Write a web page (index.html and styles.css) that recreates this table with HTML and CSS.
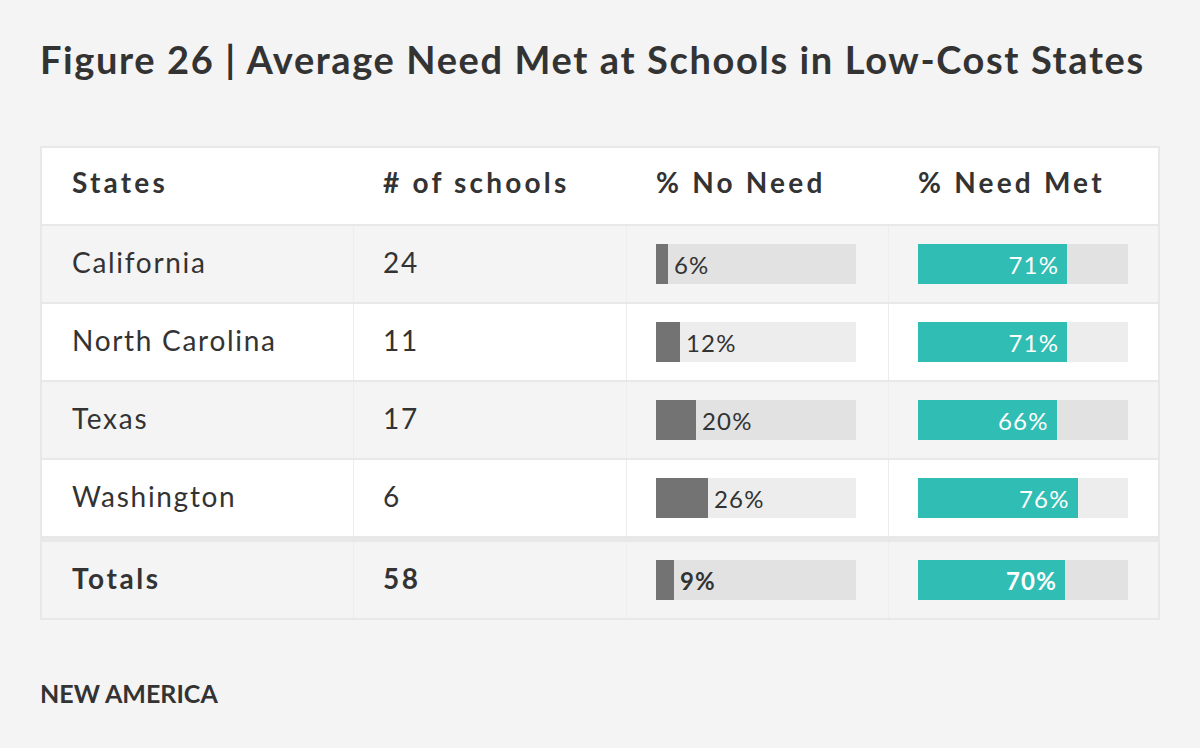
FILE: index.html
```html
<!DOCTYPE html>
<html lang="en">
<head>
<meta charset="utf-8">
<title>Figure 26</title>
<link rel="stylesheet" href="styles.css">
</head>
<body>
<main class="page">
  <h1 class="title">Figure 26 | Average Need Met at Schools in Low-Cost States</h1>
  <div class="table">
    <div class="row head">
      <div class="cell">States</div>
      <div class="cell"># of schools</div>
      <div class="cell">% No Need</div>
      <div class="cell">% Need Met</div>
    </div>
    <div class="row odd">
      <div class="cell">California</div>
      <div class="cell">24</div>
      <div class="cell"><div class="track short"><div class="fill dark" style="width:6%"></div><span class="lbl">6%</span></div></div>
      <div class="cell"><div class="track long"><div class="fill teal" style="width:71%"><span class="lbl in">71%</span></div></div></div>
    </div>
    <div class="row even">
      <div class="cell">North Carolina</div>
      <div class="cell">11</div>
      <div class="cell"><div class="track short"><div class="fill dark" style="width:12%"></div><span class="lbl">12%</span></div></div>
      <div class="cell"><div class="track long"><div class="fill teal" style="width:71%"><span class="lbl in">71%</span></div></div></div>
    </div>
    <div class="row odd">
      <div class="cell">Texas</div>
      <div class="cell">17</div>
      <div class="cell"><div class="track short"><div class="fill dark" style="width:20%"></div><span class="lbl">20%</span></div></div>
      <div class="cell"><div class="track long"><div class="fill teal" style="width:66%"><span class="lbl in">66%</span></div></div></div>
    </div>
    <div class="row even last">
      <div class="cell">Washington</div>
      <div class="cell">6</div>
      <div class="cell"><div class="track short"><div class="fill dark" style="width:26%"></div><span class="lbl">26%</span></div></div>
      <div class="cell"><div class="track long"><div class="fill teal" style="width:76%"><span class="lbl in">76%</span></div></div></div>
    </div>
    <div class="row odd total">
      <div class="cell">Totals</div>
      <div class="cell">58</div>
      <div class="cell"><div class="track short"><div class="fill dark" style="width:9%"></div><span class="lbl">9%</span></div></div>
      <div class="cell"><div class="track long"><div class="fill teal" style="width:70%"><span class="lbl in">70%</span></div></div></div>
    </div>
  </div>
  <div class="brand">NEW AMERICA</div>
</main>
</body>
</html>
```

FILE: styles.css
```css
* { box-sizing: border-box; }
html, body {
  margin: 0;
  padding: 0;
  background: #f4f4f4;
}
body {
  font-family: "Lato", "Liberation Sans", sans-serif;
  color: #333333;
}
.page {
  padding: 34px 40px 0 40px;
}
.title {
  margin: 0;
  font-size: 38px;
  line-height: 50px;
  font-weight: 700;
  letter-spacing: 1.62px;
  color: #333333;
}
.table {
  margin-top: 62px;
  border: 2px solid #e8e8e8;
  width: 1120px;
}
.row {
  display: grid;
  grid-template-columns: 311px 273px 262px 1fr;
  height: 78px;
  border-bottom: 2px solid #e8e8e8;
  font-size: 28px;
  letter-spacing: 1.7px;
}
.row.head {
  background: #ffffff;
  font-weight: 700;
  letter-spacing: 3.2px;
}
.row.head .cell { padding-bottom: 8px; }
.row.odd { background: #f4f4f4; }
.row.even { background: #ffffff; }
.row.last { height: 82px; border-bottom-width: 6px; }
.row.total {
  border-bottom: 0;
  height: 76px;
  font-weight: 700;
  letter-spacing: 2.6px;
}
.cell {
  display: flex;
  align-items: center;
  padding-left: 30px;
  padding-bottom: 4px;
}
.row:not(.head) .cell + .cell {
  border-left: 1px solid #ededed;
  padding-left: 29px;
}
.track {
  position: relative;
  display: flex;
  align-items: center;
  height: 40px;
  margin-top: 4px;
  background: rgba(0, 0, 0, 0.07);
}
.track.short { width: 200px; }
.track.long { width: 210px; }
.fill {
  height: 40px;
  display: flex;
  align-items: center;
  justify-content: flex-end;
}
.fill.dark { background: #737373; }
.fill.teal { background: #30bdb3; }
.lbl {
  font-size: 24px;
  letter-spacing: 1.2px;
  padding-left: 6px;
  color: #333333;
}
.lbl.in {
  color: #ffffff;
  padding-left: 0;
  padding-right: 8px;
}
.brand {
  margin-top: 58px;
  font-size: 25px;
  font-weight: 700;
  letter-spacing: 0;
  color: #333333;
}
```
